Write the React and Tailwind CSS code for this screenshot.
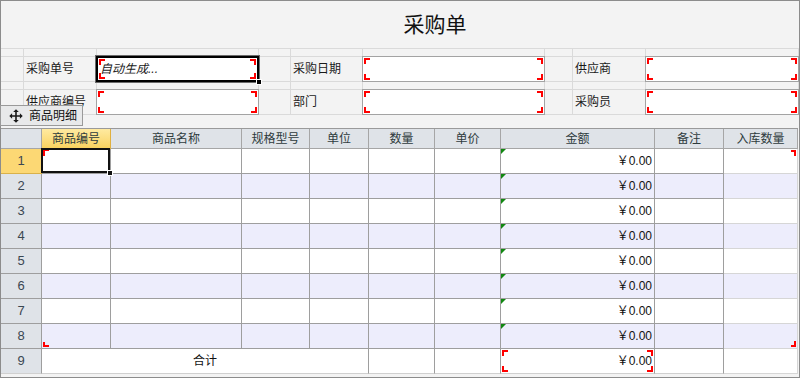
import React from "react";

const FONT = "font-['Liberation_Sans','Noto_Sans_CJK_SC',sans-serif]";

function Brackets({ all = true, tl, tr, bl, br, inset = "1px" }) {
  const show = (v) => (all ? true : v);
  return (
    <>
      {show(tl) && (
        <span className="pointer-events-none absolute top-[1px] left-[1px] w-[6px] h-[6px] border-t-2 border-l-2 border-[#ff0000]" />
      )}
      {show(tr) && (
        <span className="pointer-events-none absolute top-[1px] right-[1px] w-[6px] h-[6px] border-t-2 border-r-2 border-[#ff0000]" />
      )}
      {show(bl) && (
        <span className="pointer-events-none absolute bottom-[1px] left-[1px] w-[6px] h-[6px] border-b-2 border-l-2 border-[#ff0000]" />
      )}
      {show(br) && (
        <span className="pointer-events-none absolute bottom-[1px] right-[1px] w-[6px] h-[6px] border-b-2 border-r-2 border-[#ff0000]" />
      )}
    </>
  );
}

function FCell({ children }) {
  return (
    <div className="border-r border-b border-[#dadada] flex items-center pl-[2px] text-[12px] text-[#1a1a1a] whitespace-nowrap">
      {children}
    </div>
  );
}

function FInput({ selected, children }) {
  return (
    <div
      className={
        "relative -mt-px -ml-px bg-white flex items-center " +
        (selected
          ? "border-2 border-black shadow-[0_0_0_1px_#6b6b6b] z-10"
          : "border border-[#a3a3a3]")
      }
    >
      <Brackets />
      {children}
      {selected && (
        <span className="absolute -right-[5px] -bottom-[5px] w-[6px] h-[6px] bg-black border border-white" />
      )}
    </div>
  );
}

function FormGrid() {
  const empty = (k) => <FCell key={k} />;
  return (
    <div className="grid grid-cols-[23px_73px_162px_32px_72px_182px_28px_73px_153px] grid-rows-[8px_25px_8px_25px] border-t border-[#dadada]">
      {Array.from({ length: 9 }).map((_, i) => empty("a" + i))}
      <FCell />
      <FCell>采购单号</FCell>
      <FInput selected>
        <span className="pl-[2px] italic text-[12px] text-[#1a1a1a]">自动生成...</span>
      </FInput>
      <FCell />
      <FCell>采购日期</FCell>
      <FInput />
      <FCell />
      <FCell>供应商</FCell>
      <FInput />
      {Array.from({ length: 9 }).map((_, i) => empty("c" + i))}
      <FCell />
      <FCell>供应商编号</FCell>
      <FInput />
      <FCell />
      <FCell>部门</FCell>
      <FInput />
      <FCell />
      <FCell>采购员</FCell>
      <FInput />
    </div>
  );
}

const headers = ["商品编号", "商品名称", "规格型号", "单位", "数量", "单价", "金额", "备注", "入库数量"];

function Triangle() {
  return (
    <span className="absolute top-0 left-0 w-0 h-0 border-t-[5px] border-r-[5px] border-t-[#118811] border-r-transparent" />
  );
}

function Money() {
  return <span className="pr-[2px] text-[12px] text-[#111]">￥0.00</span>;
}

function Table() {
  const rows = [1, 2, 3, 4, 5, 6, 7, 8];
  return (
    <div className="w-[797px] grid grid-cols-[41px_69px_131px_68px_59px_66px_66px_154px_69px_74px] grid-rows-[20px_repeat(9,25px)] border-t border-[#9a9a9a]">
      <div className="bg-[#dfe3e8] border-r border-b border-[#a6a6a6]" />
      {headers.map((h, i) => (
        <div
          key={h}
          className={
            "flex items-center justify-center text-[12px] text-[#2e3b3d] border-r border-b " +
            (i === 0
              ? "bg-gradient-to-b from-[#ffeaa0] to-[#f9d35f] border-[#e0b040]"
              : "bg-[#dfe3e8] border-[#a6a6a6]")
          }
        >
          {h}
        </div>
      ))}
      {rows.map((r) => {
        const alt = r % 2 === 0;
        const bg = alt ? "bg-[#ededfc]" : "bg-white";
        return (
          <React.Fragment key={r}>
            <div
              className={
                "flex items-center justify-center text-[13px] text-[#3a4752] border-r border-b " +
                (r === 1 ? "bg-[#fcd874] border-[#d9b14a]" : "bg-[#dfe3e8] border-[#9e9e9e]")
              }
            >
              {r}
            </div>
            {headers.map((h, i) => {
              const last = i === 8;
              return (
                <div
                  key={h}
                  className={
                    "relative flex items-center justify-end border-r border-b " +
                    bg +
                    (last ? " border-[#d6d6d6]" : " border-[#9e9e9e]")
                  }
                >
                  {i === 6 && <Triangle />}
                  {i === 6 && <Money />}
                  {r === 1 && i === 0 && (
                    <>
                      <span className="absolute left-[1px] top-0 w-[6px] h-[7px] border-t-2 border-l-2 border-[#ff0000]" />
                      <span className="absolute -left-px -top-px right-0 bottom-0 border-2 border-[#111] z-10" />
                      <span className="absolute -right-[3px] -bottom-[3px] w-[6px] h-[6px] bg-[#111] border border-white z-20" />
                    </>
                  )}
                  {r === 1 && i === 8 && (
                    <span className="absolute right-[1px] top-[1px] w-[5px] h-[6px] border-t-2 border-r-2 border-[#ff0000]" />
                  )}
                  {r === 8 && i === 0 && (
                    <span className="absolute left-[1px] bottom-[1px] w-[6px] h-[5px] border-b-2 border-l-2 border-[#ff0000]" />
                  )}
                  {r === 8 && i === 8 && (
                    <span className="absolute right-[1px] bottom-[1px] w-[5px] h-[6px] border-b-2 border-r-2 border-[#ff0000]" />
                  )}
                </div>
              );
            })}
          </React.Fragment>
        );
      })}
      <div className="flex items-center justify-center text-[13px] text-[#3a4752] bg-[#dfe3e8] border-r border-b border-[#9e9e9e] border-b-[#d0d0d0]">
        9
      </div>
      <div className="col-span-4 flex items-center justify-center text-[12px] text-[#111] bg-white border-r border-b border-[#9e9e9e] border-b-[#d0d0d0]">
        合计
      </div>
      <div className="bg-white border-r border-b border-[#9e9e9e] border-b-[#d0d0d0]" />
      <div className="bg-white border-r border-b border-[#9e9e9e] border-b-[#d0d0d0]" />
      <div className="relative flex items-center justify-end bg-white border-r border-b border-[#9e9e9e] border-b-[#d0d0d0]">
        <Brackets />
        <Money />
      </div>
      <div className="bg-white border-r border-b border-[#9e9e9e] border-b-[#d0d0d0]" />
      <div className="bg-white border-r border-b border-[#d6d6d6]" />
    </div>
  );
}

function MoveIcon() {
  return (
    <svg width="14" height="14" viewBox="0 0 14 14">
      <path d="M7 2.5v9M2.5 7h9" stroke="#1a1a1a" strokeWidth="1.6" />
      <path d="M7 0.3l2.8 2.8H4.2z M7 13.7l2.8-2.8H4.2z M0.3 7l2.8-2.8v5.6z M13.7 7l-2.8-2.8v5.6z" fill="#1a1a1a" />
    </svg>
  );
}

export default function App() {
  return (
    <div className={"w-[802px] h-[379px] bg-white " + FONT}>
      <div className="relative w-[800px] h-[378px] border border-[#8c8c8c] bg-[#f3f3f3] flex flex-col">
        <div className="h-[47px] shrink-0 flex items-center justify-center pl-[70px] text-[21px] text-[#111]">
          采购单
        </div>
        <FormGrid />
        <div className="h-[13px] shrink-0" />
        <Table />
        <div className="absolute -left-px top-[104px] w-[83px] h-[21px] bg-[#e8e9ea] border border-[#9a9a9a] flex items-center gap-[6px] pl-[8px] text-[12px] text-[#111] z-30">
          <MoveIcon />
          <span>商品明细</span>
        </div>
      </div>
    </div>
  );
}
